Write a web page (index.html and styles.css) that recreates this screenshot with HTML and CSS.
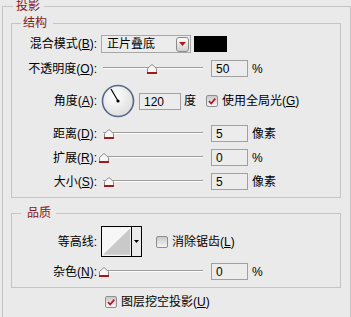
FILE: index.html
```html
<!DOCTYPE html>
<html lang="zh">
<head>
    <meta charset="UTF-8">
    <title>投影</title>
    <link rel="stylesheet" href="styles.css">
</head>
<body>
    <fieldset class="group outer">
        <legend>投影</legend>

        <fieldset class="group struct">
            <legend>结构</legend>

            <div class="row">
                <span class="label">混合模式(<u>B</u>):</span>
                <div class="select">
                    <span>正片叠底</span>
                    <span class="select-btn">
                        <svg width="7" height="4" viewBox="0 0 7 4"><path d="M0 0H7L3.5 4Z" fill="#b01818"/></svg>
                    </span>
                </div>
                <div class="swatch"></div>
            </div>

            <div class="row">
                <span class="label">不透明度(<u>O</u>):</span>
                <div class="slider">
                    <div class="track"></div>
                    <svg class="thumb" style="left: 48px" width="10" height="10" viewBox="0 0 10 10"><path d="M0.5 9.5V4.5L5 0.5L9.5 4.5V9.5Z" fill="#f6f6f6" stroke="#8c8c8c"/><rect x="0" y="8" width="10" height="2" fill="#a51818"/></svg>
                </div>
                <div class="field">50</div>
                <span class="unit">%</span>
            </div>

            <div class="row row-angle">
                <span class="label">角度(<u>A</u>):</span>
                <svg class="dial" width="34" height="34" viewBox="0 0 34 34">
                    <defs>
                        <radialGradient id="dialFill" cx="0.4" cy="0.35" r="0.7">
                            <stop offset="0" stop-color="#ffffff"/>
                            <stop offset="1" stop-color="#dcdcdc"/>
                        </radialGradient>
                    </defs>
                    <circle cx="17" cy="17" r="15.5" fill="url(#dialFill)" stroke="#56658a" stroke-width="1.6"/>
                    <line x1="17" y1="17" x2="10" y2="5" stroke="#000" stroke-width="1.2"/>
                    <circle cx="17" cy="17" r="1.6" fill="#000"/>
                </svg>
                <div class="field field-wide">120</div>
                <span class="unit unit-deg">度</span>
                <span class="check checked">
                    <svg width="10" height="10" viewBox="0 0 10 10"><path d="M2 5.2L4.2 7.5L8.3 2.6" fill="none" stroke="#b3172c" stroke-width="1.7"/></svg>
                </span>
                <span class="check-text">使用全局光(<u>G</u>)</span>
            </div>

            <div class="row">
                <span class="label">距离(<u>D</u>):</span>
                <div class="slider">
                    <div class="track"></div>
                    <svg class="thumb" style="left: 5px" width="10" height="10" viewBox="0 0 10 10"><path d="M0.5 9.5V4.5L5 0.5L9.5 4.5V9.5Z" fill="#f6f6f6" stroke="#8c8c8c"/><rect x="0" y="8" width="10" height="2" fill="#a51818"/></svg>
                </div>
                <div class="field">5</div>
                <span class="unit">像素</span>
            </div>

            <div class="row">
                <span class="label">扩展(<u>R</u>):</span>
                <div class="slider">
                    <div class="track"></div>
                    <svg class="thumb" style="left: 0px" width="10" height="10" viewBox="0 0 10 10"><path d="M0.5 9.5V4.5L5 0.5L9.5 4.5V9.5Z" fill="#f6f6f6" stroke="#8c8c8c"/><rect x="0" y="8" width="10" height="2" fill="#a51818"/></svg>
                </div>
                <div class="field">0</div>
                <span class="unit">%</span>
            </div>

            <div class="row">
                <span class="label">大小(<u>S</u>):</span>
                <div class="slider">
                    <div class="track"></div>
                    <svg class="thumb" style="left: 5px" width="10" height="10" viewBox="0 0 10 10"><path d="M0.5 9.5V4.5L5 0.5L9.5 4.5V9.5Z" fill="#f6f6f6" stroke="#8c8c8c"/><rect x="0" y="8" width="10" height="2" fill="#a51818"/></svg>
                </div>
                <div class="field">5</div>
                <span class="unit">像素</span>
            </div>
        </fieldset>

        <fieldset class="group quality">
            <legend>品质</legend>

            <div class="row">
                <span class="label">等高线:</span>
                <div class="contour">
                    <svg class="contour-preview" width="30" height="29" viewBox="0 0 30 29">
                        <rect x="0" y="0" width="30" height="29" fill="#f7f7f7"/>
                        <path d="M1 28L29 1V28Z" fill="#c9c9c9"/>
                    </svg>
                    <span class="contour-btn">
                        <svg width="5" height="3" viewBox="0 0 5 3"><path d="M0 0H5L2.5 3Z" fill="#000"/></svg>
                    </span>
                </div>
                <span class="check check-aa"></span>
                <span class="check-text">消除锯齿(<u>L</u>)</span>
            </div>

            <div class="row">
                <span class="label">杂色(<u>N</u>):</span>
                <div class="slider">
                    <div class="track"></div>
                    <svg class="thumb" style="left: 0px" width="10" height="10" viewBox="0 0 10 10"><path d="M0.5 9.5V4.5L5 0.5L9.5 4.5V9.5Z" fill="#f6f6f6" stroke="#8c8c8c"/><rect x="0" y="8" width="10" height="2" fill="#a51818"/></svg>
                </div>
                <div class="field">0</div>
                <span class="unit">%</span>
            </div>
        </fieldset>

        <div class="knockout">
            <span class="check checked">
                <svg width="10" height="10" viewBox="0 0 10 10"><path d="M2 5.2L4.2 7.5L8.3 2.6" fill="none" stroke="#b3172c" stroke-width="1.7"/></svg>
            </span>
            <span class="check-text">图层挖空投影(<u>U</u>)</span>
        </div>
    </fieldset>
</body>
</html>
```

FILE: styles.css
```css
body {
    margin: 0;
    width: 351px;
    height: 317px;
    overflow: hidden;
    background-color: #eaeaea;
    font-family: "Liberation Sans", "Noto Sans CJK SC", sans-serif;
    font-size: 12px;
    line-height: 14px;
    color: #000;
}
.group {
    margin: 0;
    padding: 0;
    min-width: 0;
    border: 1px solid #c4c4c4;
}
.group legend {
    color: #861616;
    line-height: 12px;
    font-size: 12px;
}
.outer {
    box-sizing: border-box;
    width: 349px;
    height: 317px;
    margin-left: 2px;
    padding: 5px 9px 0 8px;
    border-bottom: none;
}
.outer > legend {
    margin-left: 2px;
    padding: 0 4px 0 3px;
}
.struct {
    padding: 6px 0 7px 0;
}
.struct > legend {
    margin-left: 9px;
    padding: 0 6px 0 2px;
}
.quality {
    margin-top: 9px;
    padding: 7px 0 7px 0;
}
.quality > legend {
    margin-left: 9px;
    padding: 0 5px 0 6px;
}
.row {
    display: flex;
    align-items: center;
    height: 17px;
    margin-bottom: 7px;
}
.row:last-child {
    margin-bottom: 0;
}
.struct .row:first-of-type {
    height: 18px;
}
.row-angle {
    height: 34px;
}
.quality .row:first-of-type {
    height: 31px;
    margin-bottom: 6px;
}
.label {
    width: 85px;
    text-align: right;
    white-space: nowrap;
}
u {
    text-decoration: underline;
    text-underline-offset: 1px;
}

/* blend mode select */
.select {
    box-sizing: border-box;
    display: flex;
    align-items: center;
    justify-content: space-between;
    width: 90px;
    height: 18px;
    margin-left: 4px;
    padding: 0 0 0 5px;
    border: 1px solid #a8a8a8;
    background-color: #ececec;
}
.select-btn {
    box-sizing: border-box;
    display: flex;
    align-items: center;
    justify-content: center;
    width: 13px;
    height: 15px;
    margin-right: 1px;
    border: 1px solid #8a8a8a;
    border-radius: 3px;
    background: linear-gradient(#fcfcfc, #cfcfcf);
}
.swatch {
    width: 33px;
    height: 16px;
    margin-left: 3px;
    background-color: #000;
}

/* sliders */
.slider {
    position: relative;
    width: 104px;
    height: 17px;
    margin-left: 2px;
}
.track {
    margin: 7px 0 0 4px;
    height: 0;
    border-top: 1px solid #9c9c9c;
    border-bottom: 1px solid #fdfdfd;
}
.thumb {
    position: absolute;
    top: 4px;
}
.field {
    box-sizing: border-box;
    width: 37px;
    height: 17px;
    margin-left: 8px;
    padding: 1px 0 0 4px;
    border: 1px solid #a0a0a0;
    background-color: #ececec;
}
.field-wide {
    width: 42px;
    margin-left: 4px;
}
.unit {
    margin-left: 4px;
}
.unit-deg {
    margin-left: 3px;
}

/* angle */
.dial {
    margin-left: 4px;
}

/* checkboxes */
.check {
    box-sizing: border-box;
    display: flex;
    align-items: center;
    justify-content: center;
    width: 12px;
    height: 12px;
    border: 1px solid #8e8e8e;
    border-radius: 2px;
    background: linear-gradient(#c9c9c9, #f4f4f4);
}
.row-angle .check {
    margin-left: 10px;
}
.check-aa {
    margin-left: 14px;
}
.check-text {
    margin-left: 4px;
    white-space: nowrap;
}

/* contour */
.contour {
    box-sizing: border-box;
    display: flex;
    width: 41px;
    height: 31px;
    margin-left: 4px;
    border: 1px solid #000;
}
.contour-preview {
    display: block;
}
.contour-btn {
    display: flex;
    align-items: center;
    justify-content: center;
    width: 9px;
    border-left: 1px solid #000;
}

.knockout {
    display: flex;
    align-items: center;
    height: 14px;
    margin: 7px 0 0 94px;
}
```
